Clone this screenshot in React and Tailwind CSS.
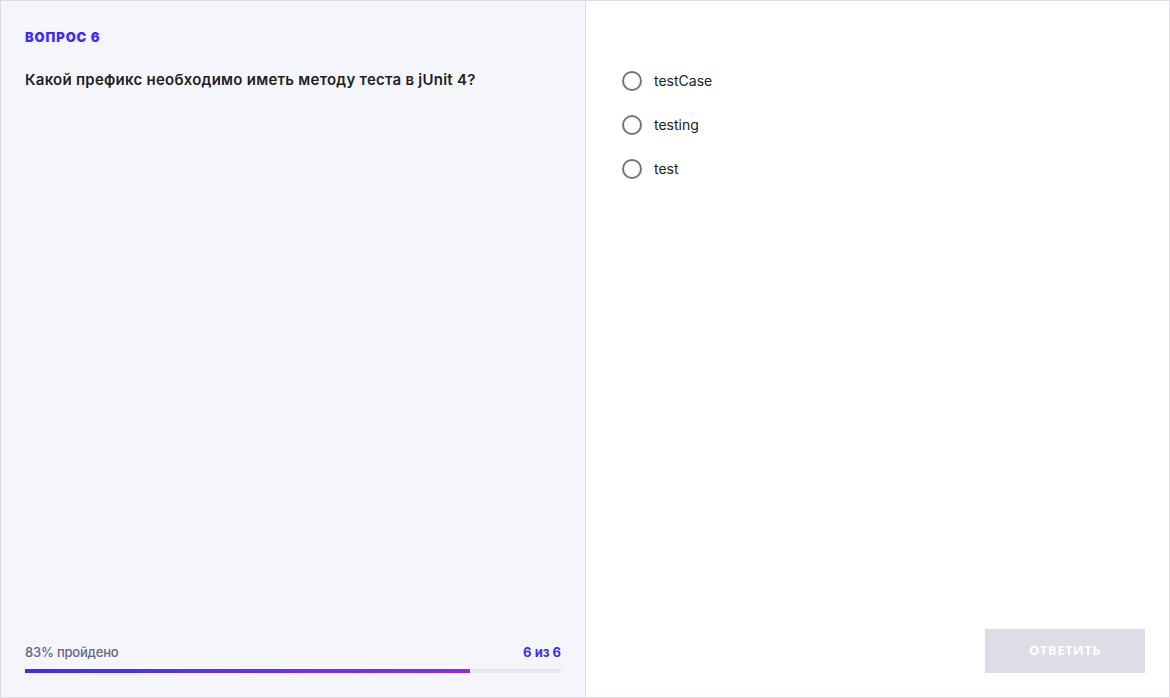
import React from "react";

const options = ["testCase", "testing", "test"];

export default function App() {
  const percent = 83;

  return (
    <div className="flex h-[698px] w-[1170px] border border-[#dcdde4] font-['Inter',sans-serif] text-[#1f1f24]">
      <div className="flex w-[585px] flex-col justify-between border-r border-[#dcdde4] bg-[#f5f6fb] px-6 pb-6 pt-[28px]">
        <div>
          <p className="text-[13px] font-black uppercase leading-4 tracking-[0.9px] text-[#3d2df5]">Вопрос 6</p>
          <h1 className="mt-[25px] text-[15px] font-semibold leading-5 tracking-[0.25px]">
            Какой префикс необходимо иметь методу теста в jUnit 4?
          </h1>
        </div>

        <div>
          <div className="flex items-center justify-between text-[13px] leading-4">
            <span className="font-medium tracking-[-0.2px] text-[#62678a]">{percent}% пройдено</span>
            <span className="font-bold text-[#3d2df5]">6 из 6</span>
          </div>
          <div className="mt-[9px] h-1 w-full bg-[#e6e6f0]">
            <div
              className="h-full bg-gradient-to-r from-[#3b2cf5] to-[#8b2be6]"
              style={{ width: `${percent}%` }}
            />
          </div>
        </div>
      </div>

      <div className="flex flex-1 flex-col justify-between px-6 pb-6 pt-[70px]">
        <div className="flex flex-col gap-6 pl-[12px]">
          {options.map((opt) => (
            <label key={opt} className="flex h-5 cursor-pointer items-center gap-3">
              <span className="h-5 w-5 rounded-full border-2 border-[#757575] bg-white" />
              <span className="text-[14px] leading-5 text-[#222]">{opt}</span>
            </label>
          ))}
        </div>

        <div className="flex justify-end">
          <button
            type="button"
            className="h-11 w-40 bg-[#dcdde6] font-['Open_Sans',sans-serif] text-[13px] font-bold uppercase tracking-[0.5px] text-white"
          >
            Ответить
          </button>
        </div>
      </div>
    </div>
  );
}
